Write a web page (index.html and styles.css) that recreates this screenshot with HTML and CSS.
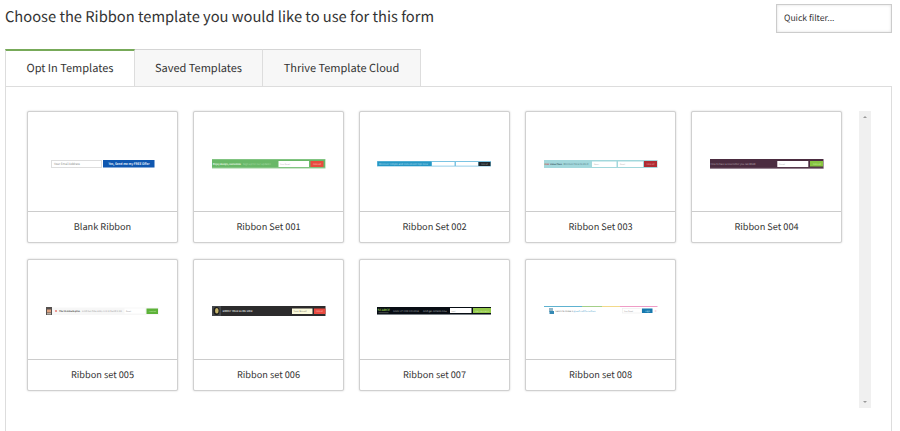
FILE: index.html
```
<!DOCTYPE html>
<html lang="en">
<head>
    <meta charset="UTF-8">
    <meta name="viewport" content="width=device-width, initial-scale=1.0">
    <title>Choose a Ribbon template</title>
    <link rel="stylesheet" href="styles.css">
</head>
<body>
    <div class="header">
        <h1>Choose the Ribbon template you would like to use for this form</h1>
        <input class="filter" type="text" placeholder="Quick filter...">
    </div>

    <ul class="tabs">
        <li class="tab tab-opt active">Opt In Templates</li>
        <li class="tab tab-saved">Saved Templates</li>
        <li class="tab tab-cloud">Thrive Template Cloud</li>
    </ul>

    <div class="panel">
        <div class="templates">
            <div class="card">
                <svg class="preview" viewBox="0 0 149 99">
                    <rect x="23.5" y="48.5" width="50" height="7" fill="#fff" stroke="#ddd"/>
                    <text x="26" y="53.2" font-size="3.1" fill="#888" textLength="26" lengthAdjust="spacingAndGlyphs">Your Email Address</text>
                    <rect x="75" y="48" width="51.5" height="7.5" fill="#0f57b0"/>
                    <text x="80.5" y="53.1" font-size="3.3" font-weight="bold" fill="#e4eefa" textLength="41" lengthAdjust="spacingAndGlyphs">Yes, Send me my FREE Offer</text>
                </svg>
                <div class="name">Blank Ribbon</div>
            </div>
            <div class="card">
                <svg class="preview" viewBox="0 0 149 99">
                    <rect x="18" y="47" width="113.5" height="9.5" fill="#9bd09a"/>
                    <rect x="18" y="47.5" width="113" height="8" fill="#69b868"/>
                    <text x="19" y="52.7" font-size="2.6" font-weight="bold" fill="#e9f8e9" textLength="28" lengthAdjust="spacingAndGlyphs">Enjoy design, customize</text>
                    <text x="49" y="52.7" font-size="2.6" fill="#a9dba8" textLength="28" lengthAdjust="spacingAndGlyphs">Sign up for our updates</text>
                    <rect x="84.5" y="49" width="30.5" height="6" fill="#fff"/>
                    <text x="86" y="52.8" font-size="2" fill="#aaa" textLength="10" lengthAdjust="spacingAndGlyphs">Your Email</text>
                    <rect x="116.5" y="49" width="13" height="6" fill="#e94b3f"/>
                    <text x="119" y="52.7" font-size="2" fill="#fbd3cf" textLength="8" lengthAdjust="spacingAndGlyphs">SIGN UP</text>
                </svg>
                <div class="name">Ribbon Set 001</div>
            </div>
            <div class="card">
                <svg class="preview" viewBox="0 0 149 99">
                    <rect x="17" y="49" width="114" height="5.5" fill="#7cc4e3"/>
                    <rect x="17.5" y="49.5" width="54" height="4.5" fill="#2697c4"/>
                    <text x="19" y="52.6" font-size="2.6" fill="#b7dfef" textLength="49" lengthAdjust="spacingAndGlyphs">Discover simple and convenient tips now</text>
                    <rect x="72" y="50" width="22.5" height="3.7" fill="#fff"/>
                    <rect x="96" y="50" width="22" height="3.7" fill="#fff"/>
                    <rect x="118.5" y="50" width="12" height="4" fill="#20282c"/>
                    <text x="121" y="52.8" font-size="2" fill="#aaa" textLength="7" lengthAdjust="spacingAndGlyphs">SIGN UP</text>
                </svg>
                <div class="name">Ribbon Set 002</div>
            </div>
            <div class="card">
                <svg class="preview" viewBox="0 0 149 99">
                    <rect x="18" y="48" width="113.5" height="8" fill="#a3d8dc"/>
                    <text x="18.5" y="52.8" font-size="2.2" font-weight="bold" fill="#c4453f" textLength="4.8" lengthAdjust="spacingAndGlyphs">FREE</text>
                    <text x="24" y="52.8" font-size="2.2" font-weight="bold" fill="#35525b" textLength="12" lengthAdjust="spacingAndGlyphs">Video Class</text>
                    <text x="37.5" y="52.8" font-size="2.6" fill="#4b767c" textLength="25" lengthAdjust="spacingAndGlyphs">Discover how to do it</text>
                    <rect x="66" y="49.5" width="24.5" height="5.5" fill="#fff"/>
                    <text x="68" y="53" font-size="2" fill="#aaa" textLength="5" lengthAdjust="spacingAndGlyphs">Name</text>
                    <rect x="92" y="49.5" width="25" height="5.5" fill="#fff"/>
                    <text x="94" y="53" font-size="2" fill="#aaa" textLength="5" lengthAdjust="spacingAndGlyphs">Email</text>
                    <rect x="118" y="49" width="13" height="6" fill="#b02c33"/>
                    <text x="120.5" y="52.9" font-size="2" fill="#e6b0b3" textLength="8" lengthAdjust="spacingAndGlyphs">SIGN UP</text>
                </svg>
                <div class="name">Ribbon Set 003</div>
            </div>
            <div class="card">
                <svg class="preview" viewBox="0 0 149 99">
                    <rect x="18" y="47" width="113.5" height="9.5" fill="#4b2c40"/>
                    <path d="M18 56.3h113.5" stroke="#8d7886" stroke-width=".8"/>
                    <text x="18.5" y="53" font-size="2.6" fill="#b9a7b2" textLength="45" lengthAdjust="spacingAndGlyphs">How to have a newsletter you can READ</text>
                    <rect x="85.3" y="49" width="31" height="6" fill="#fff"/>
                    <text x="87" y="52.8" font-size="2" fill="#aaa" textLength="6" lengthAdjust="spacingAndGlyphs">Email</text>
                    <rect x="118" y="49" width="13" height="5.5" fill="#86c440"/>
                    <text x="121" y="52.7" font-size="2" fill="#d6f0b5" textLength="8" lengthAdjust="spacingAndGlyphs">SIGN UP</text>
                </svg>
                <div class="name">Ribbon Set 004</div>
            </div>
            <div class="card">
                <svg class="preview" viewBox="0 0 149 99">
                    <rect x="24" y="47.5" width="107" height="7.5" fill="#f7f7f7"/>
                    <rect x="18" y="47" width="6" height="8" fill="#54504e"/>
                    <rect x="19" y="49.5" width="4" height="3" fill="#dda280"/>
                    <rect x="19" y="53" width="4" height="1.5" fill="#b8b1a8"/>
                    <circle cx="28" cy="51" r="1.1" fill="#e9837c"/>
                    <text x="31" y="52.2" font-size="2.4" font-weight="bold" fill="#333" textLength="21" lengthAdjust="spacingAndGlyphs">The 15 minute plan</text>
                    <text x="54" y="52.2" font-size="2.5" fill="#999" textLength="40" lengthAdjust="spacingAndGlyphs">Find out how easy it is to build a list</text>
                    <rect x="96.5" y="48.5" width="20.5" height="5" fill="#fff"/>
                    <text x="98" y="52.2" font-size="2" fill="#888" textLength="5" lengthAdjust="spacingAndGlyphs">Email</text>
                    <rect x="118.5" y="48.5" width="11.5" height="5.5" fill="#5db239"/>
                    <text x="121" y="52.2" font-size="1.8" fill="#c9ecb8" textLength="7" lengthAdjust="spacingAndGlyphs">Download</text>
                </svg>
                <div class="name">Ribbon set 005</div>
            </div>
            <div class="card">
                <svg class="preview" viewBox="0 0 149 99">
                    <rect x="18" y="46" width="113.5" height="10" fill="#2c2b2c"/>
                    <rect x="18" y="46" width="9" height="10" fill="#45484b"/>
                    <ellipse cx="22.5" cy="51" rx="3" ry="4" fill="#191919"/>
                    <ellipse cx="22.8" cy="50.8" rx="1.8" ry="2.8" fill="#c5b46b"/>
                    <text x="28.5" y="52" font-size="2.5" font-weight="bold" fill="#d5d5d5" textLength="30" lengthAdjust="spacingAndGlyphs">BOOST YOUR BLOG NOW</text>
                    <rect x="98" y="48.5" width="20.5" height="5.5" fill="#fbfadc"/>
                    <text x="99.5" y="52" font-size="2.4" fill="#6f6a4c" textLength="13" lengthAdjust="spacingAndGlyphs">Your Email</text>
                    <rect x="120" y="48.5" width="11.5" height="5.5" fill="#e94a40"/>
                    <text x="122" y="52" font-size="2" fill="#fac8c4" textLength="7" lengthAdjust="spacingAndGlyphs">SIGN UP</text>
                </svg>
                <div class="name">Ribbon set 006</div>
            </div>
            <div class="card">
                <svg class="preview" viewBox="0 0 149 99">
                    <rect x="17" y="47" width="114" height="8" fill="#080d14"/>
                    <path d="M17 54.5h114" stroke="#7c8389"/>
                    <text x="17.5" y="51" font-size="3" font-weight="bold" fill="#86b946" textLength="12.5" lengthAdjust="spacingAndGlyphs">SCARCE</text>
                    <path d="M18.5 52.7h10" stroke="#6c736e" stroke-width=".6"/>
                    <text x="33" y="52" font-size="2.4" fill="#8f9498" textLength="26" lengthAdjust="spacingAndGlyphs">SIGN UP FOR COURSE</text>
                    <text x="63" y="52" font-size="2.5" fill="#b4b8bb" textLength="24" lengthAdjust="spacingAndGlyphs">and get access now</text>
                    <rect x="90" y="48" width="21.5" height="5" fill="#fff"/>
                    <text x="91.5" y="51.5" font-size="1.8" fill="#999" textLength="4" lengthAdjust="spacingAndGlyphs">Email</text>
                    <rect x="113" y="48" width="18" height="5" fill="#94c94c"/>
                    <text x="115" y="51.5" font-size="2.2" fill="#dcf1bf" textLength="14" lengthAdjust="spacingAndGlyphs">GET ACCESS</text>
                </svg>
                <div class="name">Ribbon set 007</div>
            </div>
            <div class="card">
                <svg class="preview" viewBox="0 0 149 99">
                    <path d="M18 46.5h38" stroke="#5eb2d0"/>
                    <path d="M56 46.5h20" stroke="#a4cf88"/>
                    <path d="M76 46.5h18" stroke="#f2d98a"/>
                    <path d="M94 46.5h37.5" stroke="#ef9cc6"/>
                    <rect x="23" y="48" width="4" height="4" fill="#93b7c8"/>
                    <rect x="23.5" y="51" width="4.5" height="3" fill="#3589b4"/>
                    <text x="29.5" y="52" font-size="2.3" fill="#666" textLength="17.5" lengthAdjust="spacingAndGlyphs">Learn to make a</text>
                    <text x="47.5" y="52" font-size="2.4" fill="#409bc8" textLength="22" lengthAdjust="spacingAndGlyphs">great call to action</text>
                    <rect x="96.5" y="48.5" width="19" height="4.5" fill="#fff" stroke="#eee" stroke-width=".7"/>
                    <text x="98" y="52" font-size="2" fill="#888" textLength="9" lengthAdjust="spacingAndGlyphs">Your Email</text>
                    <rect x="116" y="48.5" width="10.5" height="4.5" fill="#1779ae"/>
                    <text x="119" y="51.8" font-size="2.2" fill="#c0e0f0" textLength="5" lengthAdjust="spacingAndGlyphs">Sign</text>
                    <circle cx="129.5" cy="51" r="1" fill="#f9dde5"/>
                </svg>
                <div class="name">Ribbon set 008</div>
            </div>
        </div>
        <div class="scrollbar">
            <span class="arrow arrow-up"></span>
            <span class="arrow arrow-down"></span>
        </div>
    </div>
</body>
</html>
```
FILE: styles.css
```
* {
    box-sizing: border-box;
}

body {
    margin: 0;
    height: 431px;
    overflow: hidden;
    background-color: #fff;
    color: #333;
    font-family: "Noto Sans CJK SC", "Open Sans", sans-serif;
    text-rendering: geometricPrecision;
}

.header {
    display: flex;
    justify-content: space-between;
    align-items: flex-start;
    height: 49px;
    padding: 4px 8px 0 5px;
}

h1 {
    margin: 0;
    font-size: 14.7px;
    font-weight: 400;
    line-height: 26px;
    white-space: nowrap;
}

.filter {
    width: 116px;
    height: 29px;
    padding: 0 7px 1px;
    border: 1px solid #ccc;
    box-shadow: inset 0 0 3px #ddd;
    color: #333;
    font-family: inherit;
    font-size: 8.6px;
    text-rendering: inherit;
    outline: none;
}

.filter::placeholder {
    color: #333;
    opacity: 1;
}

.tabs {
    display: flex;
    margin: 0 0 0 5px;
    padding: 0;
    list-style: none;
}

.tab {
    height: 37px;
    border-top: 1px solid #d5d5d5;
    border-right: 1px solid #ddd;
    background-color: #f7f7f7;
    font-size: 11px;
    line-height: 36px;
    text-align: center;
    white-space: nowrap;
}

.tab.active {
    border-top: 2px solid #77aa59;
    border-left: 1px solid #ddd;
    background-color: #fff;
    line-height: 34px;
}

.tab-opt {
    width: 130px;
}

.tab-saved {
    width: 128px;
}

.tab-cloud {
    width: 158px;
}

.panel {
    display: flex;
    justify-content: space-between;
    height: 360px;
    margin: 0 8px 0 5px;
    padding: 24px 20px 0 21px;
    border: 1px solid #ddd;
}

.templates {
    display: grid;
    grid-template-columns: repeat(5, 151px);
    gap: 16px 15px;
    align-content: start;
}

.card {
    height: 132px;
    border: 1px solid #d0d0d0;
    border-radius: 2px;
    background-color: #fff;
    box-shadow: 0 0 2px #ccc;
}

.preview {
    display: block;
    width: 149px;
    height: 100px;
    border-bottom: 1px solid #ccc;
}

.name {
    font-size: 9.2px;
    line-height: 28px;
    text-align: center;
}

.scrollbar {
    display: flex;
    flex-direction: column;
    justify-content: space-between;
    align-items: center;
    width: 12px;
    height: 297px;
    padding: 5px 0;
    background-color: #f0f0f0;
}

.arrow {
    border-left: 2px solid transparent;
    border-right: 2px solid transparent;
}

.arrow-up {
    border-bottom: 2px solid #999;
}

.arrow-down {
    border-top: 2px solid #999;
}
```
